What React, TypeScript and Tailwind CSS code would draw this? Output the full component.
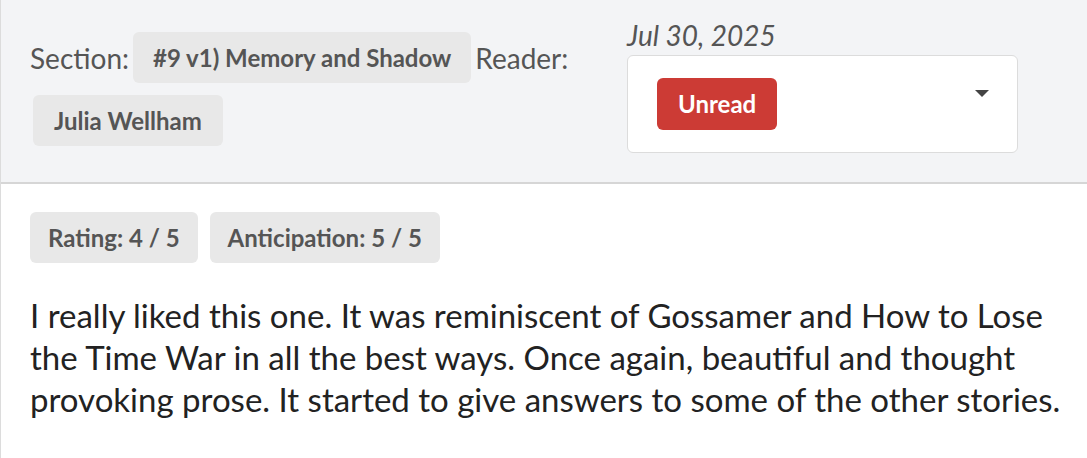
import React from "react";

export default function App() {
  return (
    <div className="w-[1087px] h-[458px] overflow-hidden bg-white border-l border-[#dcdcdc] font-['Lato',_sans-serif]">
      <div className="flex items-start bg-[#f3f4f6] border-b-2 border-[#d6d6d6] pt-[19px] pb-[29px] pl-[29px]">
        <div className="w-[597px] pt-[13px] flex flex-wrap items-center gap-x-[4px] gap-y-[12px]">
          <span className="text-[28px] leading-[32px] text-[#555]">Section:</span>
          <span className="h-[51px] px-[20px] flex items-center rounded-[6px] bg-[#e8e8e8] text-[24px] font-bold text-[#555]">
            #9 v1) Memory and Shadow
          </span>
          <span className="text-[28px] leading-[32px] text-[#555]">Reader:</span>
          <span className="ml-[3px] h-[51px] px-[21px] flex items-center rounded-[6px] bg-[#e8e8e8] text-[24px] font-bold text-[#555]">
            Julia Wellham
          </span>
        </div>
        <div className="w-[391px] flex flex-col">
          <div className="text-[28px] leading-[32px] italic text-[#555]">Jul 30, 2025</div>
          <div className="mt-[4px] h-[98px] rounded-[6px] border border-[#dcdcdc] bg-white flex items-start justify-between pl-[29px] pr-[28px] pt-[22px]">
            <span className="h-[52px] px-[21px] flex items-center rounded-[6px] bg-[#cc3b35] text-white text-[24px] font-bold">
              Unread
            </span>
            <svg width="14" height="7" viewBox="0 0 14 7" className="mt-[12px]">
              <polygon points="0,0 14,0 7,7" fill="#444" />
            </svg>
          </div>
        </div>
      </div>
      <div className="pl-[29px] pt-[28px] pr-[16px]">
        <div className="flex gap-[12px]">
          <span className="h-[51px] px-[18px] flex items-center rounded-[6px] bg-[#e8e8e8] text-[24px] font-bold text-[#555]">
            Rating: 4 / 5
          </span>
          <span className="h-[51px] px-[18px] flex items-center rounded-[6px] bg-[#e8e8e8] text-[24px] font-bold text-[#555]">
            Anticipation: 5 / 5
          </span>
        </div>
        <p className="mt-[31px] text-[33px] leading-[42px] text-[#222]">
          I really liked this one. It was reminiscent of Gossamer and How to Lose the Time War in all the best ways. Once again, beautiful and thought provoking prose. It started to give answers to some of the other stories.
        </p>
      </div>
    </div>
  );
}
